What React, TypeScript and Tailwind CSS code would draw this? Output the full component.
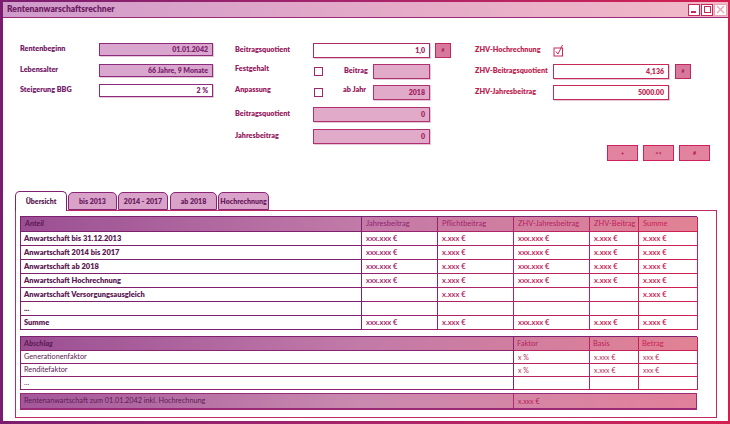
import React from 'react'

const colTpl1 = 'grid-cols-[341px_76px_76px_76px_49px_59px]'
const colTpl2 = 'grid-cols-[493px_76px_49px_59px]'

const b1 = [
  'border-[#7d2070]',
  'border-[#982270]',
  'border-[#ad2468]',
  'border-[#bb2262]',
  'border-[#c6215a]',
  'border-[#cf1f52]',
]
const t1 = [
  'text-[#5a1852]',
  'text-[#a22a70]',
  'text-[#b52a6a]',
  'text-[#c02862]',
  'text-[#c8265c]',
  'text-[#d22655]',
]
const h1 = [
  'text-[#5a1852] italic font-bold',
  'text-[#8e2272]',
  'text-[#a3226a]',
  'text-[#b52262]',
  'text-[#c0205c]',
  'text-[#cc2256]',
]
const b2 = ['border-[#8a2270]', 'border-[#bb2262]', 'border-[#c6215a]', 'border-[#cf1f52]']
const t2 = ['text-[#5a1852]', 'text-[#bb2a62]', 'text-[#c4285c]', 'text-[#cc2656]']
const h2 = ['text-[#5a1852] italic font-bold', 'text-[#b52262]', 'text-[#c0205c]', 'text-[#cc2256]']

const rows1 = [
  ['Anwartschaft bis 31.12.2013', 'xxx.xxx €', 'x.xxx €', 'xxx.xxx €', 'x.xxx €', 'x.xxx €'],
  ['Anwartschaft 2014 bis 2017', 'xxx.xxx €', 'x.xxx €', 'xxx.xxx €', 'x.xxx €', 'x.xxx €'],
  ['Anwartschaft ab 2018', 'xxx.xxx €', 'x.xxx €', 'xxx.xxx €', 'x.xxx €', 'x.xxx €'],
  ['Anwartschaft Hochrechnung', 'xxx.xxx €', 'x.xxx €', 'xxx.xxx €', 'x.xxx €', 'x.xxx €'],
  ['Anwartschaft Versorgungsausgleich', '', 'x.xxx €', '', '', 'x.xxx €'],
  ['...', '', '', '', '', ''],
  ['Summe', 'xxx.xxx €', 'x.xxx €', 'xxx.xxx €', 'x.xxx €', 'x.xxx €'],
]
const head1 = ['Anteil', 'Jahresbeitrag', 'Pflichtbeitrag', 'ZHV-Jahresbeitrag', 'ZHV-Beitrag', 'Summe']

const rows2 = [
  ['Generationenfaktor', 'x %', 'x.xxx €', 'xxx €'],
  ['Renditefaktor', 'x %', 'x.xxx €', 'xxx €'],
  ['...', '', '', ''],
]
const head2 = ['Abschlag', 'Faktor', 'Basis', 'Betrag']

const font = 'font-["Lato","Open_Sans",sans-serif]'

function Field({ value, w, fill, border, text }: { value?: string; w: string; fill: string; border: string; text: string }) {
  return (
    <div className={`${w} h-full border ${fill} ${border} ${text} flex items-center justify-end pr-[4px] text-[7px] font-extrabold shadow-[1px_1px_0_rgba(150,40,100,0.25)]`}>
      {value}
    </div>
  )
}

function HashBtn() {
  return (
    <div className="w-[16px] h-[15px] border border-[#c0285c] bg-[#d9789d] flex items-center justify-center text-[5px] font-bold text-[#a01850]">
      #
    </div>
  )
}

function Box() {
  return <div className="w-[9px] h-[9px] border border-[#9c2a6a] bg-white" />
}

function Tab({ label, active }: { label: string; active?: boolean }) {
  return (
    <div
      className={
        active
          ? 'w-[52px] h-[20px] -mb-px rounded-t-[5px] border border-b-0 border-[#7d2070] bg-white flex items-center justify-center text-[7px] font-extrabold text-[#5a1852] z-10'
          : 'h-[18px] rounded-t-[5px] border border-[#8a2474] bg-[#d8a2c9] flex items-center justify-center text-[7px] font-extrabold text-[#6a1a5e]'
      }
    >
      {label}
    </div>
  )
}

export default function App() {
  return (
    <div className={`w-[730px] h-[424px] ${font} bg-gradient-to-r from-[#7a1d6e] via-[#a8236a] to-[#d31f50] pt-[2px] pl-[3px] pr-[2px] pb-[3px]`}>
      <div className="w-full h-full bg-white flex flex-col">
        {/* title bar */}
        <div className="h-[16px] shrink-0 flex items-center justify-between border-b border-[#9a2a78] bg-gradient-to-r from-[#cf9bcb] via-[#e3a9c8] to-[#f1b9c7] pl-[4px] pr-[1px]">
          <span className="text-[8.5px] font-extrabold text-[#6e1b62]">Rentenanwarschaftsrechner</span>
          <div className="flex gap-[1px]">
            <div className="w-[12px] h-[12px] border border-[#c8285a] bg-white flex items-end pl-[2px] pb-[2px]">
              <div className="w-[5px] h-[1.5px] bg-[#c8285a]" />
            </div>
            <div className="w-[12px] h-[12px] border border-[#c8285a] bg-white flex items-center justify-center">
              <div className="w-[7px] h-[7px] border-[1.5px] border-[#c8285a]" />
            </div>
            <div className="w-[13px] h-[12px] border border-[#e7a2b6] bg-white flex items-center justify-center">
              <svg width="9" height="9" viewBox="0 0 9 9">
                <path d="M1 1L8 8M8 1L1 8" stroke="#e7a2b6" strokeWidth="1.2" />
              </svg>
            </div>
          </div>
        </div>

        {/* form */}
        <div className="mt-[25px] ml-[17px] flex items-start">
          {/* left */}
          <div className="w-[215px] flex flex-col gap-[7.5px]">
            {[
              ['Rentenbeginn', '01.01.2042', true],
              ['Lebensalter', '66 Jahre, 9 Monate', true],
              ['Steigerung BBG', '2 %', false],
            ].map(([l, v, filled]) => (
              <div key={l as string} className="h-[13px] flex items-center">
                <span className="w-[79px] text-[7.25px] font-extrabold text-[#74206a]">{l}</span>
                <Field
                  value={v as string}
                  w="w-[114px]"
                  fill={filled ? 'bg-[#d9a7cd]' : 'bg-white'}
                  border="border-[#8e2a7c]"
                  text="text-[#7d2470]"
                />
              </div>
            ))}
          </div>

          {/* middle */}
          <div className="w-[240px] flex flex-col gap-[6px]">
            <div className="h-[15px] flex items-center">
              <span className="w-[78px] text-[7.25px] font-extrabold text-[#962062]">Beitragsquotient</span>
              <Field value="1,0" w="w-[117px]" fill="bg-white" border="border-[#b02a6a]" text="text-[#a0225e]" />
              <div className="ml-[5px]">
                <HashBtn />
              </div>
            </div>
            <div className="h-[15px] flex items-center">
              <span className="w-[79px] text-[7.25px] font-extrabold text-[#962062] self-start">Festgehalt</span>
              <Box />
              <span className="ml-[21px] w-[29px] text-[7.25px] font-extrabold text-[#962062]">Beitrag</span>
              <Field w="w-[57px]" fill="bg-[#e2aac9]" border="border-[#b03070]" text="text-[#a0225e]" />
            </div>
            <div className="h-[15px] flex items-center">
              <span className="w-[79px] text-[7.25px] font-extrabold text-[#962062] self-start">Anpassung</span>
              <Box />
              <span className="ml-[20px] w-[30px] text-[7.25px] font-extrabold text-[#962062] self-start">ab Jahr</span>
              <Field value="2018" w="w-[57px]" fill="bg-[#e2aac9]" border="border-[#b03070]" text="text-[#a0225e]" />
            </div>
            <div className="mt-[1px] h-[15px] flex items-center">
              <span className="w-[78px] text-[7.25px] font-extrabold text-[#962062]">Beitragsquotient</span>
              <Field value="0" w="w-[117px]" fill="bg-[#e2aac9]" border="border-[#b03070]" text="text-[#a0225e]" />
            </div>
            <div className="mt-[1px] h-[15px] flex items-center">
              <span className="w-[78px] text-[7.25px] font-extrabold text-[#962062]">Jahresbeitrag</span>
              <Field value="0" w="w-[117px]" fill="bg-[#e2aac9]" border="border-[#b03070]" text="text-[#a0225e]" />
            </div>
          </div>

          {/* right */}
          <div className="flex flex-col gap-[6px]">
            <div className="h-[15px] flex items-center">
              <span className="w-[78px] text-[7.25px] font-extrabold text-[#bf1f52]">ZHV-Hochrechnung</span>
              <svg width="12" height="13" viewBox="0 0 12 13">
                <rect x="1" y="4" width="8.5" height="8" fill="white" stroke="#c8285a" strokeWidth="1" />
                <path d="M3 7.5L5 10L9.5 1" fill="none" stroke="#c8285a" strokeWidth="1" />
              </svg>
            </div>
            <div className="h-[15px] flex items-center">
              <span className="w-[78px] text-[7.25px] font-extrabold text-[#bf1f52]">ZHV-Beitragsquotient</span>
              <Field value="4,136" w="w-[116px]" fill="bg-white" border="border-[#c82a58]" text="text-[#c01f50]" />
              <div className="ml-[6px]">
                <HashBtn />
              </div>
            </div>
            <div className="h-[15px] flex items-center">
              <span className="w-[78px] text-[7.25px] font-extrabold text-[#bf1f52]">ZHV-Jahresbeitrag</span>
              <Field value="5000.00" w="w-[116px]" fill="bg-white" border="border-[#c82a58]" text="text-[#c01f50]" />
            </div>
          </div>
        </div>

        {/* action buttons */}
        <div className="mt-[1px] mr-[18px] flex justify-end gap-[5px]">
          {['+', '<<', '#'].map((s) => (
            <div
              key={s}
              className="w-[31px] h-[16px] border border-[#d0205a] bg-[#e283a0] flex items-center justify-center text-[5.5px] font-bold text-[#b01545]"
            >
              {s}
            </div>
          ))}
        </div>

        {/* tabs */}
        <div className="mt-[30px] ml-[12px] flex items-end gap-[1px]">
          <Tab label="Übersicht" active />
          <div className="w-[49px]">
            <Tab label="bis 2013" />
          </div>
          <div className="w-[50px] -mt-[2px]">
            <Tab label="2014 - 2017" />
          </div>
          <div className="ml-[1px] w-[47px]">
            <Tab label="ab 2018" />
          </div>
          <div className="w-[51px]">
            <Tab label="Hochrechnung" />
          </div>
        </div>

        {/* panel */}
        <div className="ml-[12px] w-[702px] border border-[#c02a62] pl-[4px] pt-[5px] pb-[7px] flex flex-col">
          {/* table 1 */}
          <div className="w-[677px] border-l border-t border-[#7d2070]">
            <div className={`grid ${colTpl1} h-[15px] bg-gradient-to-r from-[#9b4f93] via-[#c27aa8] to-[#e28294]`}>
              {head1.map((h, i) => (
                <div key={h} className={`border-r border-b ${b1[i]} ${h1[i]} pl-[4px] flex items-center text-[7.5px]`}>
                  {h}
                </div>
              ))}
            </div>
            {rows1.map((r, ri) => (
              <div key={ri} className={`grid ${colTpl1} h-[14px]`}>
                {r.map((c, i) => (
                  <div
                    key={i}
                    className={`border-r border-b ${b1[i]} ${t1[i]} ${i === 0 ? 'pl-[3px] text-[7.5px] font-extrabold' : 'pl-[4px] text-[7.5px] font-bold'} flex items-center`}
                  >
                    {c}
                  </div>
                ))}
              </div>
            ))}
          </div>

          {/* table 2 */}
          <div className="mt-[6px] w-[677px] border-l border-t border-[#7d2070]">
            <div className={`grid ${colTpl2} h-[14px] bg-gradient-to-r from-[#9b4f93] via-[#c27aa8] to-[#e28294]`}>
              {head2.map((h, i) => (
                <div key={h} className={`border-r border-b ${b2[i]} ${h2[i]} pl-[3px] flex items-center text-[7.5px]`}>
                  {h}
                </div>
              ))}
            </div>
            {rows2.map((r, ri) => (
              <div key={ri} className={`grid ${colTpl2} h-[13px]`}>
                {r.map((c, i) => (
                  <div
                    key={i}
                    className={`border-r border-b ${b2[i]} ${t2[i]} ${i === 0 ? 'pl-[3px] text-[7.25px]' : 'pl-[4px] text-[7px]'} flex items-center`}
                  >
                    {c}
                  </div>
                ))}
              </div>
            ))}
          </div>

          {/* footer bar */}
          <div className="mt-[3px] w-[677px] h-[17px] grid grid-cols-[493px_184px] border border-b-2 border-[#9a2a78] bg-gradient-to-r from-[#a4579a] via-[#c98aaf] to-[#e2809a]">
            <div className="border-r border-[#b02a6a] pl-[3px] flex items-center text-[7.25px] text-[#5e1a55]">
              Rentenanwartschaft zum 01.01.2042 inkl. Hochrechnung
            </div>
            <div className="pl-[4px] flex items-center text-[7px] text-[#b8205a]">x.xxx €</div>
          </div>
        </div>
      </div>
    </div>
  )
}
